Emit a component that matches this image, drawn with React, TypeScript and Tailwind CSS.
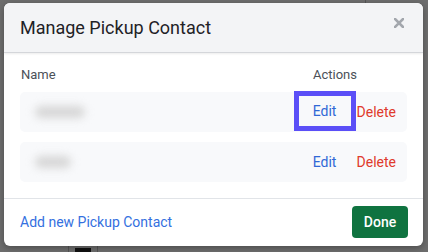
import React from "react";

export default function App() {
  const rows = [
    { w: "w-[50px]", active: true },
    { w: "w-[36px]", active: false },
  ];
  return (
    <div
      className="relative w-[428px] h-[252px] overflow-hidden bg-[#6d6d6d] pt-[3px] pl-[4px]"
      style={{ fontFamily: "Roboto, 'Liberation Sans', sans-serif" }}
    >
      {/* faint page behind overlay */}
      <div className="absolute left-[68px] top-[246px] h-[6px] w-px bg-[#555]" />
      <div className="absolute left-[75px] top-[248px] h-[4px] w-[16px] bg-[#111]" />
      <div className="absolute left-[97px] top-[246px] h-[6px] w-px bg-[#555]" />
      <div className="absolute left-[365px] top-0 h-[4px] w-px bg-[#555]" />

      <div className="relative w-[419px] h-[243px] rounded-[6px] bg-white overflow-hidden flex flex-col shadow-[0_2px_6px_rgba(0,0,0,0.3)]">
        {/* header */}
        <div className="relative h-[50px] shrink-0 bg-[#f3f4f6] border-b border-[#d4d6da] flex items-center px-[16px] shadow-[0_1px_2px_rgba(0,0,0,0.08)]">
          <span className="text-[18px] text-[#1f2226] leading-none">Manage Pickup Contact</span>
          <svg
            className="absolute right-[19px] top-[15px]"
            width="10"
            height="10"
            viewBox="0 0 10 10"
          >
            <path d="M1 1 L9 9 M9 1 L1 9" stroke="#a3a7ad" strokeWidth="2.6" strokeLinecap="square" />
          </svg>
        </div>

        {/* body */}
        <div className="flex-1 px-[16px] pt-[15px]">
          <div className="flex text-[13px] text-[#4b5058] leading-none h-[13px] items-center">
            <span className="pl-[1px]">Name</span>
            <span className="ml-auto mr-[50px]">Actions</span>
          </div>
          <div className="mt-[11px] flex flex-col gap-[10px]">
            {rows.map((r, i) => (
              <div
                key={i}
                className="h-[40px] rounded-[5px] bg-[#f8f9fb] flex items-center pl-[10px] pr-[11px]"
              >
                <div className={`${r.w} h-[12px] rounded-full bg-[#d6d6d6] blur-[4px] ml-[5px]`} />
                <div className="ml-auto flex items-center">
                  <span
                    className={`w-[62px] h-[40px] flex items-center justify-center border-[5px] text-[14px] text-[#3068d6] ${
                      r.active ? "border-[#5b4ff7] -mt-[2px]" : "border-transparent"
                    }`}
                  >
                    Edit
                  </span>
                  <span className="ml-[1px] text-[14px] text-[#e03a2c]">Delete</span>
                </div>
              </div>
            ))}
          </div>
        </div>

        {/* footer */}
        <div className="h-[48px] shrink-0 border-t border-[#e1e4e8] flex items-center justify-between pl-[16px] pr-[15px] pb-[1px]">
          <span className="text-[14px] text-[#3470e0]">Add new Pickup Contact</span>
          <button className="w-[56px] h-[32px] rounded-[4px] bg-[#0f7340] text-white text-[14px] font-medium">
            Done
          </button>
        </div>
      </div>
    </div>
  );
}
